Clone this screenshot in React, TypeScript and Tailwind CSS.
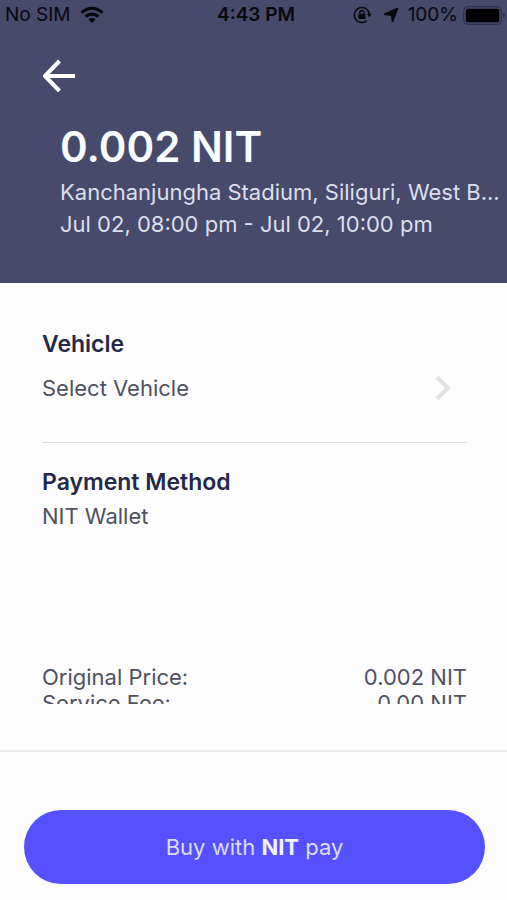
import type { ReactNode } from 'react';

interface PriceRowProps {
  label: string;
  value: string;
}

function StatusBar() {
  return (
    <div className="grid grid-cols-[1fr_auto_1fr] items-center h-[30px] pl-[5px] text-[#08080f] text-[19px] leading-[30px] whitespace-nowrap">
      <div className="flex items-center gap-[9px]">
        <span>No SIM</span>
        <svg className="w-[24px] h-[18px]" viewBox="0 0 24 18" fill="none" stroke="currentColor" strokeWidth="3.4">
          <path d="M1.8 6.6a14.5 14.5 0 0 1 20.4 0" />
          <path d="M5.6 10.7a9.2 9.2 0 0 1 12.8 0" />
          <path d="M12 17.2l-3.6-3.8a5.2 5.2 0 0 1 7.2 0z" fill="currentColor" stroke="none" />
        </svg>
      </div>
      <span className="font-semibold">4:43 PM</span>
      <div className="flex items-center justify-end">
        {/* Rotation lock */}
        <svg className="w-[19px] h-[18px] mr-[11px]" viewBox="0 0 19 18" fill="none" stroke="currentColor" strokeWidth="1.5">
          <path d="M13.6 14.8A7.5 7.5 0 1 1 16.3 8.2" />
          <path d="M13.9 7.8h4.8l-2.4 3.4z" fill="currentColor" stroke="none" />
          <rect x="5.3" y="7.8" width="7.2" height="5.2" rx="0.8" fill="currentColor" stroke="none" />
          <path d="M6.8 8V6.6a2.1 2.1 0 0 1 4.2 0V8" strokeWidth="1.3" />
        </svg>
        {/* Location arrow */}
        <svg className="w-[16px] h-[16px] mr-[9px]" viewBox="0 0 16 16" fill="currentColor" stroke="currentColor" strokeWidth="1" strokeLinejoin="round">
          <path d="M15 1 9.6 15 8.6 8.8 7.4 7.4 1 7z" />
          <path d="M14.8 1.2 9.2 14.6V8.4L1.4 7.6z" />
        </svg>
        <span>100%</span>
        <svg className="w-[44px] h-[19px] ml-[5px]" viewBox="0 0 44 19">
          <rect x="0.7" y="0.7" width="37.6" height="17.6" rx="4.5" fill="none" stroke="#2f304e" strokeWidth="1.2" />
          <rect x="2.8" y="2.8" width="33.4" height="13.4" rx="2" fill="#000" />
          <path d="M40 6.5c2.6.8 2.6 5.2 0 6z" fill="#2f304e" />
        </svg>
      </div>
    </div>
  );
}

function SectionTitle({ children }: { children: ReactNode }) {
  return <h2 className="text-[23px] leading-[30px] font-semibold text-[#252849]">{children}</h2>;
}

function PriceRow({ label, value }: PriceRowProps) {
  return (
    <div className="flex justify-between">
      <dt>{label}</dt>
      <dd>{value}</dd>
    </div>
  );
}

export default function App() {
  return (
    <div className="flex flex-col h-screen bg-[#fcfcfd] font-['Inter','Liberation_Sans',sans-serif] text-[#50515f]">
      <header className="shrink-0 bg-[#474a6b] pb-[43px]">
        <StatusBar />
        <button type="button" aria-label="Back" className="block ml-[42px] mt-[28px] text-white">
          <svg className="w-[34px] h-[34px]" viewBox="0 0 34 34" fill="none" stroke="currentColor" strokeWidth="4" strokeLinejoin="round">
            <path d="M33 18H4" />
            <path d="M17.5 3 3 18l14.5 15" />
          </svg>
        </button>
        <div className="pl-[60px] mt-[31px] text-[22px] leading-[32px] text-[#dcdfec]">
          <h1 className="text-[42px] leading-[48px] mb-[5px] font-semibold text-[#f8fbff]">0.002 NIT</h1>
          <p className="whitespace-nowrap overflow-hidden">Kanchanjungha Stadium, Siliguri, West B...</p>
          <p>Jul 02, 08:00 pm - Jul 02, 10:00 pm</p>
        </div>
      </header>

      <main className="flex-1 min-h-0 overflow-y-auto [scrollbar-width:none] pl-[42px] pr-[40px] pt-[46px] text-[22px] leading-[30px]">
        <section className="pb-[39px] border-b border-[#dcdcdf]">
          <SectionTitle>Vehicle</SectionTitle>
          <button type="button" className="flex items-center justify-between w-full mt-[14px] pr-[16px]">
            <span>Select Vehicle</span>
            <svg className="w-[16px] h-[24px]" viewBox="0 0 16 24" fill="none" stroke="#e2e2e4" strokeWidth="4">
              <path d="M2 1.5 13 12 2 22.5" />
            </svg>
          </button>
        </section>

        <section className="pt-[24px]">
          <SectionTitle>Payment Method</SectionTitle>
          <p className="mt-[4px]">NIT Wallet</p>
        </section>

        <dl className="mt-[133px] leading-[26px]">
          <PriceRow label="Original Price:" value="0.002 NIT" />
          <PriceRow label="Service Fee:" value="0.00 NIT" />
        </dl>
      </main>

      <footer className="shrink-0 pt-[46px]">
        <div className="border-t-2 border-[#ebebed] pl-[24px] pr-[22px] pt-[58px] pb-[16px]">
          <button type="button" className="w-full h-[74px] rounded-full bg-[#5551ff] text-[22px] text-[#dcdcff]">
            Buy with <strong className="font-bold text-[#f1f1ff]">NIT</strong> pay
          </button>
        </div>
      </footer>
    </div>
  );
}
